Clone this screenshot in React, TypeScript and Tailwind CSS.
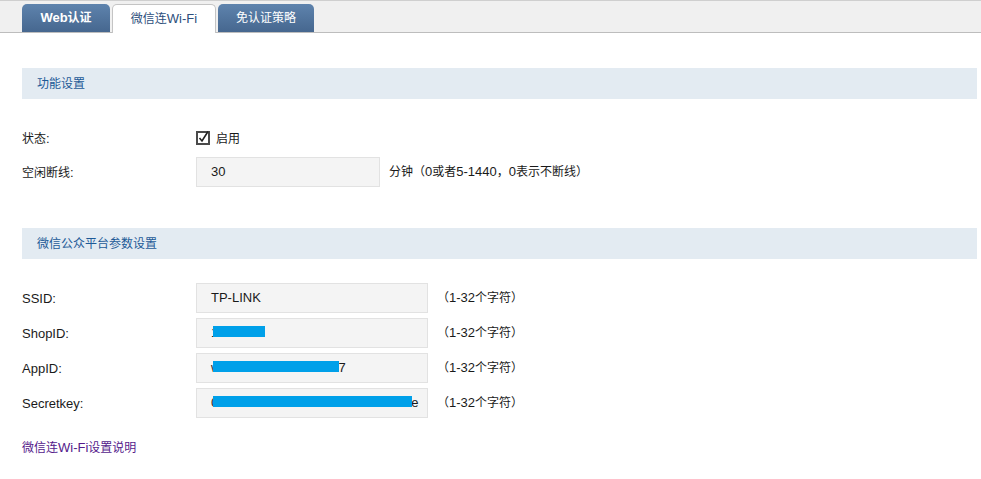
import React from "react";

const font = { fontFamily: '"Liberation Sans", "Noto Sans CJK SC", sans-serif' };

function T({ s }: { s: string }) {
  const parts = s.match(/[\u3000-\u303f\u4e00-\u9fff\uff00-\uffef]+|[^\u3000-\u303f\u4e00-\u9fff\uff00-\uffef]+/g) || [];
  return (
    <>
      {parts.map((p, i) =>
        /[\u3000-\u303f\u4e00-\u9fff\uff00-\uffef]/.test(p) ? (
          <span key={i} className="text-[12px]">
            {p}
          </span>
        ) : (
          <span key={i}>{p}</span>
        )
      )}
    </>
  );
}

function Tab({ label, active, w, bold }: { label: string; active?: boolean; w: string; bold?: boolean }) {
  if (active) {
    return (
      <div
        className={`${w} h-[29px] -mb-px flex items-center justify-center rounded-t-[5px] border border-b-0 border-[#c4c4c4] bg-white text-[13px] text-[#2d4f7c]`}
      >
        <T s={label} />
      </div>
    );
  }
  return (
    <div
      className={`${w} h-[28px] flex items-center justify-center rounded-t-[5px] bg-gradient-to-b from-[#5e83ad] to-[#46678f] text-[13px] text-white ${bold ? "font-bold" : ""}`}
    >
      <T s={label} />
    </div>
  );
}

function SectionHeader({ title }: { title: string }) {
  return (
    <div className="h-[31px] bg-[#e3ebf2] flex items-center pl-[15px] pt-[1px] text-[13px] text-[#1d5a97]">
      <T s={title} />
    </div>
  );
}

function Field({ children, w }: { children?: React.ReactNode; w: string }) {
  return (
    <div className={`${w} h-[30px] border border-[#e2e2e2] bg-[#f4f4f4] flex items-center pl-[14px] text-[13px] text-[#1a1a1a]`}>
      {children}
    </div>
  );
}

function Masked({ pre, post, gap, bar }: { pre: string; post?: string; gap: string; bar: string }) {
  return (
    <span className="relative inline-flex items-center">
      <span>{pre}</span>
      <span className={`inline-block ${gap}`} />
      {post ? <span>{post}</span> : null}
      <span className={`absolute left-[2px] top-[3px] h-[11px] ${bar} bg-[#00a0e9]`} />
    </span>
  );
}

function Row({ label, children, hint }: { label: string; children: React.ReactNode; hint?: string }) {
  return (
    <div className="flex items-center h-[30px]">
      <div className="w-[174px] pt-[1px] text-[13px] text-[#1a1a1a]">
        <T s={label} />
      </div>
      {children}
      {hint ? (
        <div className="text-[13px] text-[#1a1a1a] pl-[9px]">
          <T s={hint} />
        </div>
      ) : null}
    </div>
  );
}

export default function App() {
  return (
    <div className="w-[981px] h-[479px] bg-white overflow-hidden" style={font}>
      <div className="h-[33px] bg-[#f0f0f0] border-t border-b border-t-[#cfcfcf] border-b-[#bdbdbd] flex items-end pl-[22px] gap-[2px]">
        <Tab label="Web认证" w="w-[88px]" bold />
        <Tab label="微信连Wi-Fi" w="w-[104px]" active />
        <Tab label="免认证策略" w="w-[96px]" />
      </div>

      <div className="pl-[22px] pr-[4px]">
        <div className="mt-[35px]">
          <SectionHeader title="功能设置" />
        </div>

        <div className="mt-[24px] flex flex-col gap-[4px]">
          <Row label="状态:">
            <div className="flex items-center gap-[6px] pt-[1px] text-[13px] text-[#1a1a1a]">
              <svg width="14" height="15" viewBox="0 0 14 15" className="-mt-[2px]">
                <rect x="1" y="2" width="12" height="12" fill="white" stroke="#4a4a4a" strokeWidth="2" />
                <path d="M3.5 8 L6 11 L12 1.5" fill="none" stroke="#222" strokeWidth="1.6" />
              </svg>
              <T s="启用" />
            </div>
          </Row>
          <Row label="空闲断线:" hint="分钟（0或者5-1440，0表示不断线）">
            <Field w="w-[184px]">30</Field>
          </Row>
        </div>

        <div className="mt-[41px]">
          <SectionHeader title="微信公众平台参数设置" />
        </div>

        <div className="mt-[24px] flex flex-col gap-[5px]">
          <Row label="SSID:" hint="（1-32个字符）">
            <Field w="w-[232px]">TP-LINK</Field>
          </Row>
          <Row label="ShopID:" hint="（1-32个字符）">
            <Field w="w-[232px]">
              <Masked pre="1" gap="w-[47px]" bar="w-[52px]" />
            </Field>
          </Row>
          <Row label="AppID:" hint="（1-32个字符）">
            <Field w="w-[232px]">
              <Masked pre="w" post="7" gap="w-[118px]" bar="w-[126px]" />
            </Field>
          </Row>
          <Row label="Secretkey:" hint="（1-32个字符）">
            <Field w="w-[232px]">
              <Masked pre="0" post="e" gap="w-[193px]" bar="w-[199px]" />
            </Field>
          </Row>
        </div>

        <div className="mt-[20px] h-[20px] flex items-center text-[13px] text-[#551a8b]">
          <T s="微信连Wi-Fi设置说明" />
        </div>
      </div>
    </div>
  );
}
